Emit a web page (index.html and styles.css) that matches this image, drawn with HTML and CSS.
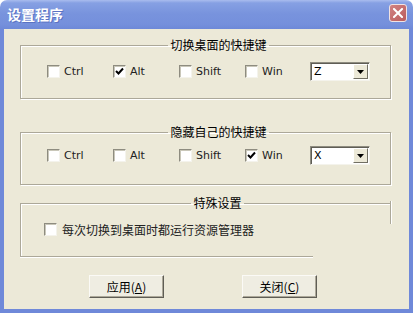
FILE: index.html
```html
<!DOCTYPE html>
<html lang="zh-CN">
<head>
    <meta charset="UTF-8">
    <title>设置程序</title>
    <link rel="stylesheet" href="styles.css">
</head>
<body>
    <div class="window">
        <div class="title-bar">
            <span class="title">设置程序</span>
            <button class="close-btn" aria-label="关闭">
                <svg width="10" height="10" viewBox="0 0 10 10"><path d="M1 1 L9 9 M9 1 L1 9" stroke="#fff" stroke-width="2" stroke-linecap="square"/></svg>
            </button>
        </div>

        <div class="client">
            <fieldset class="group group-switch">
                <legend>切换桌面的快捷键</legend>
                <div class="key-row">
                    <label class="check"><span class="box"></span>Ctrl</label>
                    <label class="check"><span class="box checked"><svg width="9" height="9" viewBox="0 0 9 9"><path d="M1 4 L3.5 6.5 L8 1.5" stroke="#000" stroke-width="2" fill="none"/></svg></span>Alt</label>
                    <label class="check"><span class="box"></span>Shift</label>
                    <label class="check"><span class="box"></span>Win</label>
                    <div class="combo">
                        <span class="combo-value">Z</span>
                        <span class="combo-btn"><svg width="7" height="4" viewBox="0 0 7 4"><path d="M0 0 H7 L3.5 4 Z" fill="#000"/></svg></span>
                    </div>
                </div>
            </fieldset>

            <fieldset class="group group-hide">
                <legend>隐藏自己的快捷键</legend>
                <div class="key-row">
                    <label class="check"><span class="box"></span>Ctrl</label>
                    <label class="check"><span class="box"></span>Alt</label>
                    <label class="check"><span class="box"></span>Shift</label>
                    <label class="check"><span class="box checked"><svg width="9" height="9" viewBox="0 0 9 9"><path d="M1 4 L3.5 6.5 L8 1.5" stroke="#000" stroke-width="2" fill="none"/></svg></span>Win</label>
                    <div class="combo">
                        <span class="combo-value">X</span>
                        <span class="combo-btn"><svg width="7" height="4" viewBox="0 0 7 4"><path d="M0 0 H7 L3.5 4 Z" fill="#000"/></svg></span>
                    </div>
                </div>
            </fieldset>

            <fieldset class="group group-special">
                <legend>特殊设置</legend>
                <label class="check check-cn"><span class="box"></span>每次切换到桌面时都运行资源管理器</label>
            </fieldset>

            <div class="actions">
                <button class="btn">应用(<u>A</u>)</button>
                <button class="btn">关闭(<u>C</u>)</button>
            </div>
        </div>
    </div>
</body>
</html>
```

FILE: styles.css
```css
html, body {
    margin: 0;
    padding: 0;
    background: #fff;
}

body {
    font-family: "Noto Sans CJK SC", "DejaVu Sans", sans-serif;
    font-size: 12px;
    color: #000;
}

.window {
    width: 413px;
    height: 313px;
    display: flex;
    flex-direction: column;
    border-radius: 7px 7px 0 0;
    overflow: hidden;
}

/* Title bar */
.title-bar {
    height: 29px;
    flex-shrink: 0;
    display: flex;
    align-items: center;
    justify-content: space-between;
    padding: 0 6px 0 7px;
    box-sizing: border-box;
    background: linear-gradient(#a9bcee 0, #86a0e3 3px, #7893dd 14px, #7590dc 24px, #6e89d8 29px);
}
.title {
    color: #fff;
    font-weight: bold;
    font-size: 14px;
    text-shadow: 1px 1px 0 #5a72c2;
    margin-top: -1px;
}
.close-btn {
    width: 18px;
    height: 18px;
    padding: 0;
    border: 1px solid #f1e3e3;
    border-radius: 3px;
    background: linear-gradient(135deg, #d18383, #bb5c5c);
    display: flex;
    align-items: center;
    justify-content: center;
    margin-top: -3px;
}

/* Client area */
.client {
    flex: 1;
    background: #ece9d8;
    border: 4px solid #6f89d9;
    border-top: none;
    padding: 8px 18px 0 16px;
    display: flex;
    flex-direction: column;
}

.group {
    margin: 0;
    border: 1px solid #aca899;
    box-shadow: inset 1px 1px 0 #fff, 1px 1px 0 #fff;
    min-width: 0;
}
.group legend {
    margin: 0 auto;
    padding: 0 2px;
    line-height: 16px;
    font-size: 12px;
}

.group-switch {
    padding: 9px 0 17px 26px;
}
.group-hide {
    margin-top: 25px;
    padding: 6px 0 19px 26px;
}

/* the third box is only partly drawn in the original */
.group-special {
    margin-top: 10px;
    padding: 12px 0 21px 23px;
    border-right: none;
    border-bottom: none;
    box-shadow: inset 1px 1px 0 #fff;
    position: relative;
}
.group-special::after {
    content: "";
    position: absolute;
    bottom: 33px;
    left: 369px;
    width: 1px;
    height: 23px;
    background: #aca899;
    box-shadow: 1px 0 0 #fff;
}
.group-special::before {
    content: "";
    position: absolute;
    bottom: 0;
    left: -1px;
    width: 293px;
    height: 1px;
    background: #aca899;
    box-shadow: 0 1px 0 #fff;
}

.key-row {
    display: flex;
    align-items: center;
    height: 19px;
}

.check {
    display: flex;
    align-items: center;
    gap: 4px;
    width: 66px;
    flex-shrink: 0;
    font-family: "DejaVu Sans", sans-serif;
    font-size: 11px;
    color: #222;
}
.check-cn {
    width: auto;
    gap: 5px;
    font-family: "Noto Sans CJK SC", sans-serif;
    font-size: 12px;
    line-height: 13px;
}

.box {
    width: 13px;
    height: 13px;
    box-sizing: border-box;
    background: #fff;
    border: 1px solid;
    border-color: #8e8c80 #f4f3ec #f4f3ec #8e8c80;
    box-shadow: inset 1px 1px 0 #c9c7b9;
    display: flex;
    align-items: center;
    justify-content: center;
    flex-shrink: 0;
}

/* Combo box */
.combo {
    width: 60px;
    height: 19px;
    box-sizing: border-box;
    background: #fff;
    border: 1px solid;
    border-color: #8e8c80 #f4f3ec #f4f3ec #8e8c80;
    box-shadow: inset 1px 1px 0 #5f5d55;
    display: flex;
    align-items: stretch;
    margin-left: -1px;
}
.combo-value {
    flex: 1;
    padding-left: 3px;
    font-family: "DejaVu Sans", sans-serif;
    font-size: 11px;
    line-height: 17px;
}
.combo-btn {
    width: 15px;
    margin: 1px 1px 1px 0;
    box-sizing: border-box;
    background: #ece9d8;
    border: 1px solid;
    border-color: #fff #716f64 #716f64 #fff;
    display: flex;
    align-items: center;
    justify-content: center;
}

/* Buttons */
.actions {
    display: flex;
    gap: 78px;
    padding-left: 69px;
    margin-top: 18px;
}
.btn {
    width: 75px;
    height: 23px;
    padding: 0;
    background: #efede2;
    border: 1px solid;
    border-color: #fbfaf6 #5f5d55 #5f5d55 #fbfaf6;
    box-shadow: inset -1px -1px 0 #aca899;
    font-family: "Noto Sans CJK SC", sans-serif;
    font-size: 12px;
    color: #000;
}
.btn u {
    text-underline-offset: 1px;
}
```
